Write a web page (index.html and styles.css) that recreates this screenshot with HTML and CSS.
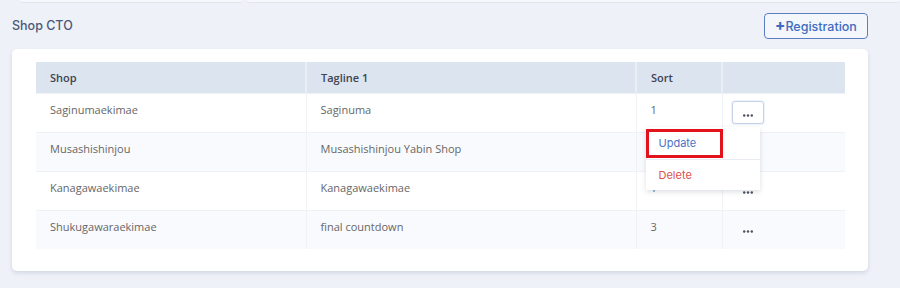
FILE: index.html
```html
<!DOCTYPE html>
<html lang="en">
<head>
    <meta charset="UTF-8">
    <meta name="viewport" content="width=device-width, initial-scale=1.0">
    <title>Shop CTO</title>
    <link rel="stylesheet" href="styles.css">
</head>
<body>
    <div class="tabs">
        <span class="tab tab-first"></span>
        <span class="tab tab-second"></span>
    </div>

    <div class="page">
        <div class="head">
            <h2 class="title">Shop CTO</h2>
            <button class="btn-add"><b>+</b>Registration</button>
        </div>

        <div class="card">
            <table class="grid">
                <thead>
                    <tr>
                        <th class="col-shop">Shop</th>
                        <th class="col-tag">Tagline 1</th>
                        <th class="col-sort">Sort</th>
                        <th class="col-act"></th>
                    </tr>
                </thead>
                <tbody>
                    <tr>
                        <td>Saginumaekimae</td>
                        <td>Saginuma</td>
                        <td>1</td>
                        <td class="act">
                            <button class="dots open">
                                <svg width="10" height="3" viewBox="0 0 10 3"><circle cx="1.2" cy="1.5" r="1.2"/><circle cx="5" cy="1.5" r="1.2"/><circle cx="8.8" cy="1.5" r="1.2"/></svg>
                            </button>
                            <div class="menu">
                                <a class="menu-item"><span class="mark">Update</span></a>
                                <a class="menu-item danger">Delete</a>
                            </div>
                        </td>
                    </tr>
                    <tr>
                        <td>Musashishinjou</td>
                        <td>Musashishinjou Yabin Shop</td>
                        <td>2</td>
                        <td class="act">
                            <button class="dots">
                                <svg width="10" height="3" viewBox="0 0 10 3"><circle cx="1.2" cy="1.5" r="1.2"/><circle cx="5" cy="1.5" r="1.2"/><circle cx="8.8" cy="1.5" r="1.2"/></svg>
                            </button>
                        </td>
                    </tr>
                    <tr>
                        <td>Kanagawaekimae</td>
                        <td>Kanagawaekimae</td>
                        <td>1</td>
                        <td class="act">
                            <button class="dots">
                                <svg width="10" height="3" viewBox="0 0 10 3"><circle cx="1.2" cy="1.5" r="1.2"/><circle cx="5" cy="1.5" r="1.2"/><circle cx="8.8" cy="1.5" r="1.2"/></svg>
                            </button>
                        </td>
                    </tr>
                    <tr>
                        <td>Shukugawaraekimae</td>
                        <td>final countdown</td>
                        <td>3</td>
                        <td class="act">
                            <button class="dots">
                                <svg width="10" height="3" viewBox="0 0 10 3"><circle cx="1.2" cy="1.5" r="1.2"/><circle cx="5" cy="1.5" r="1.2"/><circle cx="8.8" cy="1.5" r="1.2"/></svg>
                            </button>
                        </td>
                    </tr>
                </tbody>
            </table>
        </div>
    </div>
</body>
</html>
```

FILE: styles.css
```css
body {
    margin: 0;
    background: #eef1f8;
    font-family: "Open Sans", Arial, sans-serif;
    color: #555;
}
.tabs {
    display: flex;
    height: 3px;
    padding-left: 20px;
    gap: 5px;
}
.tab {
    display: block;
    height: 2px;
    background: #f7f8fc;
    border-bottom: 1px solid #e1e5ee;
    border-radius: 0 0 3px 3px;
}
.tab-first {
    width: 222px;
}
.tab-second {
    flex: 1;
}
.page {
    padding: 0 32px 17px 12px;
}
.head {
    display: flex;
    justify-content: space-between;
    align-items: center;
    margin: 10px 0 11px;
    height: 25px;
}
.title {
    margin: 0;
    font-family: Inter, "Open Sans", sans-serif;
    font-size: 12.5px;
    font-weight: 500;
    color: #4b5877;
}
.btn-add {
    width: 104px;
    height: 26px;
    padding: 0;
    background: #f3f6fb;
    border: 1px solid #5d7fc2;
    border-radius: 4px;
    color: #3e6cc1;
    font-family: Inter, "Open Sans", sans-serif;
    font-size: 12.5px;
    font-weight: 500;
}
.btn-add b {
    font-size: 15px;
    font-weight: 800;
}
.card {
    background: #fff;
    border-radius: 5px;
    padding: 13px 23px 22px 24px;
    box-shadow: 0 2px 4px rgba(40, 60, 100, 0.14);
}
.grid {
    width: 809px;
    border-collapse: collapse;
    font-size: 11px;
    table-layout: fixed;
}
.grid th,
.grid td {
    box-sizing: border-box;
}
.col-shop { width: 270px; }
.col-tag { width: 330px; }
.col-sort { width: 86px; }
.col-act { width: 123px; }
.grid th {
    height: 31px;
    padding: 0 14px;
    background: #dce4ef;
    border-left: 2px solid #eaeff6;
    text-align: left;
    font-weight: 600;
    color: #3d4350;
}
.grid th:first-child {
    border-left: none;
}
.grid td {
    height: 39px;
    padding: 8px 14px 0;
    border-top: 1px solid #eef1f6;
    border-left: 1px solid #f0f2f6;
    vertical-align: top;
    line-height: 16px;
    color: #666;
}
.grid td:first-child {
    border-left: none;
}
.grid tbody tr:nth-child(even) td {
    background: #f9fafd;
}
.grid td.act {
    position: relative;
    padding: 0 0 0 9px;
    vertical-align: middle;
}
.dots {
    display: block;
    width: 32px;
    height: 23px;
    padding: 0;
    background: transparent;
    border: 1px solid transparent;
    border-radius: 3px;
    fill: #4a4f5c;
    margin-top: -2px;
}
.dots.open {
    background: #fff;
    border-color: #c6d2e8;
    box-shadow: 0 0 0 1px #eef2fa;
    margin-top: 0;
}
.menu {
    position: absolute;
    left: -77px;
    top: 33px;
    z-index: 2;
    width: 114px;
    padding-top: 2px;
    background: #fff;
    box-shadow: 0 2px 5px rgba(30, 40, 70, 0.15);
    font-family: Inter, "Open Sans", sans-serif;
    font-size: 11px;
}
.menu-item {
    display: block;
    height: 30px;
    line-height: 30px;
    color: #4a72c6;
}
.menu-item + .menu-item {
    border-top: 1px solid #e9ecf2;
    padding-left: 13px;
}
.mark {
    display: block;
    width: 77px;
    height: 29px;
    box-sizing: border-box;
    padding-left: 10px;
    line-height: 23px;
    border: 3px solid #e3131c;
}
.danger {
    color: #d9534f;
}
```
